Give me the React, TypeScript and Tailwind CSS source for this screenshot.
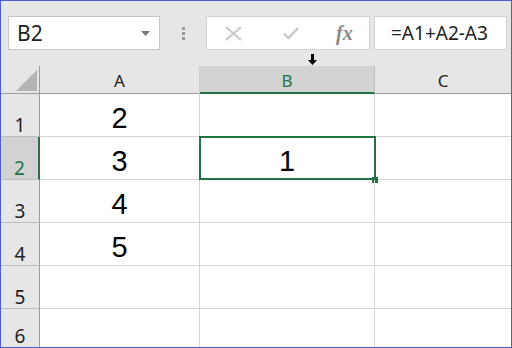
import React from "react";

const rows = [
  { n: "1", a: "2", b: "" },
  { n: "2", a: "3", b: "1" },
  { n: "3", a: "4", b: "" },
  { n: "4", a: "5", b: "" },
  { n: "5", a: "", b: "" },
  { n: "6", a: "", b: "" },
];

export default function App() {
  const ui = { fontFamily: '"Noto Sans", "Open Sans", sans-serif' };
  const cellFont = { fontFamily: '"Liberation Sans", Arial, sans-serif' };
  return (
    <div className="w-[512px] h-[348px] overflow-hidden border border-[#4a5fd6] bg-[#e6e6e6] flex flex-col relative" style={ui}>
      {/* toolbar */}
      <div className="h-[65px] shrink-0 flex items-start pt-[15px] pl-[7px] pr-[4px]">
        <div className="w-[152px] h-[34px] bg-white border border-[#c6c6c6] flex items-center justify-between pl-[8px] pr-[9px]">
          <span className="text-[21px] text-[#222] leading-none">B2</span>
          <svg width="9" height="5" viewBox="0 0 9 5"><path d="M0 0h9L4.5 5z" fill="#7a7a7a" /></svg>
        </div>
        <div className="w-[46px] h-[34px] flex flex-col items-center justify-center gap-[2px]">
          <div className="w-[3px] h-[3px] bg-[#9a9a9a]" />
          <div className="w-[3px] h-[3px] bg-[#9a9a9a]" />
          <div className="w-[3px] h-[3px] bg-[#9a9a9a]" />
        </div>
        <div className="w-[164px] h-[34px] bg-white border border-[#d2d2d2] flex items-center">
          <svg className="ml-[18px]" width="17" height="15" viewBox="0 0 17 15">
            <path d="M1 1L16 14M16 1L1 14" stroke="#c8c8c8" strokeWidth="2" />
          </svg>
          <svg className="ml-[41px]" width="16" height="13" viewBox="0 0 16 13">
            <path d="M1 6.5L5.5 11L15 1" stroke="#c8c8c8" strokeWidth="2.4" fill="none" />
          </svg>
          <span className="ml-[37px] text-[20px] italic font-bold text-[#8a8a8a] leading-none" style={{ fontFamily: '"Liberation Serif", "DejaVu Serif", serif' }}>fx</span>
        </div>
        <div className="ml-[4px] flex-1 h-[34px] bg-white border border-[#d2d2d2] flex items-center pl-[16px]">
          <span className="text-[19px] text-[#222] leading-none">=A1+A2-A3</span>
        </div>
      </div>

      {/* grid */}
      <div className="grid grid-cols-[39px_160px_175px_1fr] grid-rows-[28px_43px_43px_43px_43px_43px_1fr] flex-1 min-h-0 bg-white relative">
        {/* header row */}
        <div className="bg-[#e6e6e6] border-r border-b border-[#9e9e9e] relative">
          <svg className="absolute left-[15px] top-[4px]" width="21" height="21" viewBox="0 0 21 21"><path d="M21 0V21H0z" fill="#b4b4b4" /></svg>
        </div>
        <div className="bg-[#e6e6e6] border-r border-b border-r-[#d0d0d0] border-b-[#9e9e9e] flex items-end justify-center pb-[3px] text-[17px] leading-none text-[#222]"><span className="pb-[1px]">A</span></div>
        <div className="bg-[#d2d2d2] border-r border-r-[#bdbdbd] border-b-2 border-b-[#217346] flex items-end justify-center pb-[2px] text-[17px] leading-none text-[#217346]"><span className="pb-[1px]">B</span></div>
        <div className="bg-[#e6e6e6] border-b border-[#9e9e9e] flex items-end justify-center pb-[3px] text-[17px] leading-none text-[#222]"><span className="pb-[1px]">C</span></div>

        {rows.map((r) => {
          const sel = r.n === "2";
          const last = r.n === "6";
          return (
            <React.Fragment key={r.n}>
              <div className={`${sel ? "bg-[#d2d2d2] border-r-2 border-r-[#217346]" : "bg-[#e6e6e6] border-r border-r-[#9e9e9e]"} ${last ? "" : "border-b border-b-[#bdbdbd]"} flex items-end justify-center pb-[1px] text-[19px] leading-none ${sel ? "text-[#217346]" : "text-[#222]"}`}>
                <span>{r.n}</span>
              </div>
              <div className={`border-r ${last ? "" : "border-b"} border-[#d4d4d4] flex items-end justify-center pb-[3px] text-[29px] leading-none text-black`} style={cellFont}>{r.a}</div>
              <div className={`border-r ${last ? "" : "border-b"} border-[#d4d4d4] flex items-end justify-center pb-[3px] text-[29px] leading-none text-black relative`} style={cellFont}>
                {r.b}
                {sel && (
                  <>
                    <div className="absolute left-[-1px] top-[-1px] right-[-2px] bottom-[-1px] border-2 border-[#217346]" />
                    <div className="absolute right-[-4px] bottom-[-4px] w-[6px] h-[6px] bg-[#217346]" />
                  </>
                )}
              </div>
              <div className={last ? "" : "border-b border-[#d4d4d4]"} />
            </React.Fragment>
          );
        })}
      </div>

      {/* mouse cursor */}
      <svg className="absolute left-[307px] top-[53px]" width="9" height="11" viewBox="0 0 9 11">
        <path d="M3 0h3v6h3L4.5 11L0 6h3z" fill="#000" />
      </svg>
    </div>
  );
}
